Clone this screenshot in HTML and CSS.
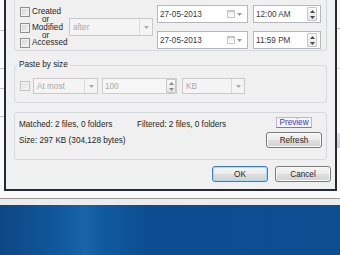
FILE: index.html
```html
<!DOCTYPE html>
<html lang="en">
<head>
    <meta charset="UTF-8">
    <meta name="viewport" content="width=device-width, initial-scale=1.0">
    <title>Paste filter</title>
    <link rel="stylesheet" href="styles.css">
</head>
<body>
    <div class="backdrop">
        <div class="dialog">

            <!-- date filter -->
            <div class="group group-dates">
                <div class="conds">
                    <label class="check"><span class="box"></span>Created</label>
                    <span class="or">or</span>
                    <label class="check"><span class="box"></span>Modified</label>
                    <span class="or">or</span>
                    <label class="check"><span class="box"></span>Accessed</label>
                </div>

                <div class="combo combo-after">
                    <span class="combo-text">after</span>
                    <span class="combo-btn"><svg width="5" height="3" viewBox="0 0 5 3"><path d="M0 0h5L2.5 3z"/></svg></span>
                </div>

                <div class="dt-grid">
                    <div class="field date">
                        <span class="field-text">27-05-2013</span>
                        <span class="cal-icon"></span>
                        <svg class="date-arrow" width="5" height="3" viewBox="0 0 5 3"><path d="M0 0h5L2.5 3z"/></svg>
                    </div>
                    <div class="field time">
                        <span class="field-text">12:00 AM</span>
                        <span class="spin">
                            <svg width="5" height="3" viewBox="0 0 5 3"><path d="M0 3h5L2.5 0z"/></svg>
                            <svg width="5" height="3" viewBox="0 0 5 3"><path d="M0 0h5L2.5 3z"/></svg>
                        </span>
                    </div>
                    <div class="field date">
                        <span class="field-text">27-05-2013</span>
                        <span class="cal-icon"></span>
                        <svg class="date-arrow" width="5" height="3" viewBox="0 0 5 3"><path d="M0 0h5L2.5 3z"/></svg>
                    </div>
                    <div class="field time">
                        <span class="field-text">11:59 PM</span>
                        <span class="spin">
                            <svg width="5" height="3" viewBox="0 0 5 3"><path d="M0 3h5L2.5 0z"/></svg>
                            <svg width="5" height="3" viewBox="0 0 5 3"><path d="M0 0h5L2.5 3z"/></svg>
                        </span>
                    </div>
                </div>
            </div>

            <!-- size filter -->
            <fieldset class="group group-size">
                <legend>Paste by size</legend>
                <div class="size-row">
                    <span class="box is-disabled"></span>
                    <div class="combo combo-mode">
                        <span class="combo-text">At most</span>
                        <span class="combo-btn"><svg width="5" height="3" viewBox="0 0 5 3"><path d="M0 0h5L2.5 3z"/></svg></span>
                    </div>
                    <div class="field num is-disabled">
                        <span class="field-text">100</span>
                        <span class="spin spin-flush">
                            <svg width="5" height="3" viewBox="0 0 5 3"><path d="M0 3h5L2.5 0z"/></svg>
                            <svg width="5" height="3" viewBox="0 0 5 3"><path d="M0 0h5L2.5 3z"/></svg>
                        </span>
                    </div>
                    <div class="combo combo-unit">
                        <span class="combo-text">KB</span>
                        <span class="combo-btn"><svg width="5" height="3" viewBox="0 0 5 3"><path d="M0 0h5L2.5 3z"/></svg></span>
                    </div>
                </div>
            </fieldset>

            <!-- results -->
            <div class="group group-stats">
                <div class="stats">
                    <div class="stats-line">
                        <span class="matched">Matched: 2 files, 0 folders</span>
                        <span>Filtered: 2 files, 0 folders</span>
                    </div>
                    <div class="stats-line">Size: 297 KB (304,128 bytes)</div>
                </div>
                <div class="stats-actions">
                    <a class="link" href="#">Preview</a>
                    <button class="btn btn-refresh">Refresh</button>
                </div>
            </div>

            <div class="actions">
                <button class="btn btn-default">OK</button>
                <button class="btn">Cancel</button>
            </div>
        </div>
    </div>
    <div class="ledge"></div>
    <div class="desktop"></div>
</body>
</html>
```

FILE: styles.css
```css
/* page = the window behind the dialog + desktop */
body {
    margin: 0;
    width: 340px;
    height: 255px;
    overflow: hidden;
    font-family: "Liberation Sans", Arial, sans-serif;
    font-size: 8.2px;
    color: #1e1e1e;
    background: #0c4a8c;
}

.backdrop {
    padding: 0 0 7px 4px;
    border-bottom: 1px solid #9c9c9c;
    background:
        linear-gradient(#c4c4c4, #c4c4c4) 0 30px / 4px 1px no-repeat,
        linear-gradient(#c4c4c4, #c4c4c4) 0 68px / 4px 1px no-repeat,
        linear-gradient(#c4c4c4, #c4c4c4) 0 88px / 4px 1px no-repeat,
        linear-gradient(#c4c4c4, #c4c4c4) 0 116px / 4px 1px no-repeat,
        linear-gradient(#bdbdbd, #bdbdbd) right 0 top 28px / 4px 1px no-repeat,
        linear-gradient(#d4d4d4, #d4d4d4) right 0 top 68px / 4px 1px no-repeat,
        linear-gradient(#e2e2e2, #cfcfcf) right 0 top 133px / 3px 15px no-repeat,
        #fafafa;
}

/* dialog */
.dialog {
    width: 333px;
    box-sizing: border-box;
    border: 2px solid #262a36;
    border-top: 0;
    background: #f0f0f0;
    padding: 0 8px 7px;
}

.group {
    border: 1px solid #d5d9de;
    border-radius: 3px;
    box-sizing: border-box;
    margin: 0;
}

/* date filter */
.group-dates {
    display: flex;
    align-items: flex-start;
    height: 51px;
    padding: 0 5px;
    border-top: 0;
    border-radius: 0 0 3px 3px;
}

.conds {
    display: flex;
    flex-direction: column;
    width: 47px;
    margin-top: 7px;
}

.check {
    display: flex;
    align-items: center;
    gap: 2px;
    height: 10px;
    line-height: 10px;
    white-space: nowrap;
}

.or {
    height: 5.5px;
    line-height: 5.5px;
    padding-left: 22px;
}

.box {
    flex: none;
    width: 10px;
    height: 10px;
    box-sizing: border-box;
    border: 1px solid #8f8f8f;
    background: linear-gradient(135deg, #cfd2d6, #f7f7f7);
    box-shadow: inset 0 0 0 1px #f2f2f2;
}

.box.is-disabled {
    border-color: #c2c2c2;
    background: linear-gradient(135deg, #e2e2e2, #f3f3f3);
}

/* combo boxes (all disabled here) */
.combo {
    display: flex;
    box-sizing: border-box;
    border: 1px solid #c9c9c9;
    background: #f4f4f4;
    color: #a8a8a8;
}

.combo-text {
    flex: 1;
    padding-left: 3px;
    display: flex;
    align-items: center;
}

.combo-btn {
    width: 12px;
    border-left: 1px solid #d9d9d9;
    display: flex;
    align-items: center;
    justify-content: center;
    color: #aaaaaa;
}

.combo svg, .field svg {
    fill: currentColor;
    display: block;
}

.combo-after {
    width: 86px;
    height: 18px;
    margin: 18px 0 0 2px;
}

.dt-grid {
    display: grid;
    grid-template-columns: 91px 68px;
    column-gap: 5px;
    row-gap: 8px;
    margin: 5px 0 0 4px;
}

/* text fields */
.field {
    display: flex;
    align-items: center;
    height: 18px;
    box-sizing: border-box;
    border: 1px solid #b5b7bd;
    background: #fff;
}

.field-text {
    flex: 1;
    padding-left: 2px;
    color: #3a3a3a;
}

.cal-icon {
    width: 8px;
    height: 8px;
    box-sizing: border-box;
    border: 1px solid #c6c6c6;
    border-top-width: 2px;
    background: linear-gradient(#eeeeee, #fdfdfd);
    margin-right: 2px;
}

.date-arrow {
    color: #9a9a9a;
    margin-right: 5px;
}

.spin {
    display: flex;
    flex-direction: column;
    align-items: center;
    justify-content: space-around;
    width: 10px;
    height: 14px;
    box-sizing: border-box;
    border: 1px solid #c7c7c7;
    border-radius: 1px;
    background: linear-gradient(#f8f8f8, #e6e6e6);
    color: #4a4a4a;
    margin-right: 3px;
}

/* size filter */
.group-size {
    margin-top: 9px;
    padding: 8px 5px;
    min-inline-size: 0;
}

.group-size legend {
    padding: 0 2px;
    margin-left: -3px;
    line-height: 10px;
}

.size-row {
    display: flex;
    align-items: center;
}

.combo-mode {
    width: 65px;
    height: 16px;
    margin-left: 3px;
}

.field.num {
    width: 75px;
    height: 16px;
    margin-left: 4px;
    border-color: #cdcdcd;
    background: #f6f6f6;
}

.field.is-disabled .field-text {
    color: #ababab;
}

.spin-flush {
    height: 14px;
    margin-right: 0;
    color: #8c8c8c;
}

.combo-unit {
    width: 63px;
    height: 16px;
    margin-left: 5px;
}

/* results */
.group-stats {
    display: flex;
    justify-content: space-between;
    margin-top: 9px;
    padding: 4px 4px 8px 4px;
}

.stats {
    padding-top: 2px;
}

.stats-line {
    display: flex;
    height: 12px;
    line-height: 12px;
    margin-bottom: 4px;
    white-space: nowrap;
}

.matched {
    width: 118px;
}

.stats-actions {
    display: flex;
    flex-direction: column;
    align-items: center;
    width: 56px;
}

.link {
    height: 11px;
    line-height: 10px;
    box-sizing: border-box;
    padding: 0 2px;
    border: 1px solid #b7b9d6;
    border-bottom-color: #6f74d6;
    background: #f7f7fb;
    color: #3434d0;
    text-decoration: none;
    margin-bottom: 4px;
}

/* buttons */
.btn {
    width: 56px;
    height: 16px;
    padding: 0;
    box-sizing: border-box;
    font: inherit;
    color: #1e1e1e;
    border: 1px solid #7a7a7a;
    border-radius: 3px;
    background: linear-gradient(#f4f4f4 0%, #ececec 48%, #dedede 52%, #d2d2d2 100%);
    box-shadow: inset 0 0 0 1px #fbfbfb;
    cursor: pointer;
}

.btn-default {
    border-color: #3c7fb1;
    box-shadow: inset 0 0 0 1px #a9dbf7;
}

.actions {
    display: flex;
    justify-content: flex-end;
    gap: 7px;
    margin: 6px -4px 0 0;
}

/* under the window */
.ledge {
    height: 6px;
    background: #ececec;
}

.desktop {
    height: 52px;
    background: linear-gradient(90deg, #0d4684 0%, #12599f 18%, #1964a9 25%, #115a9f 30%, #0c4c90 45%, #0d4d90 100%);
}
```
